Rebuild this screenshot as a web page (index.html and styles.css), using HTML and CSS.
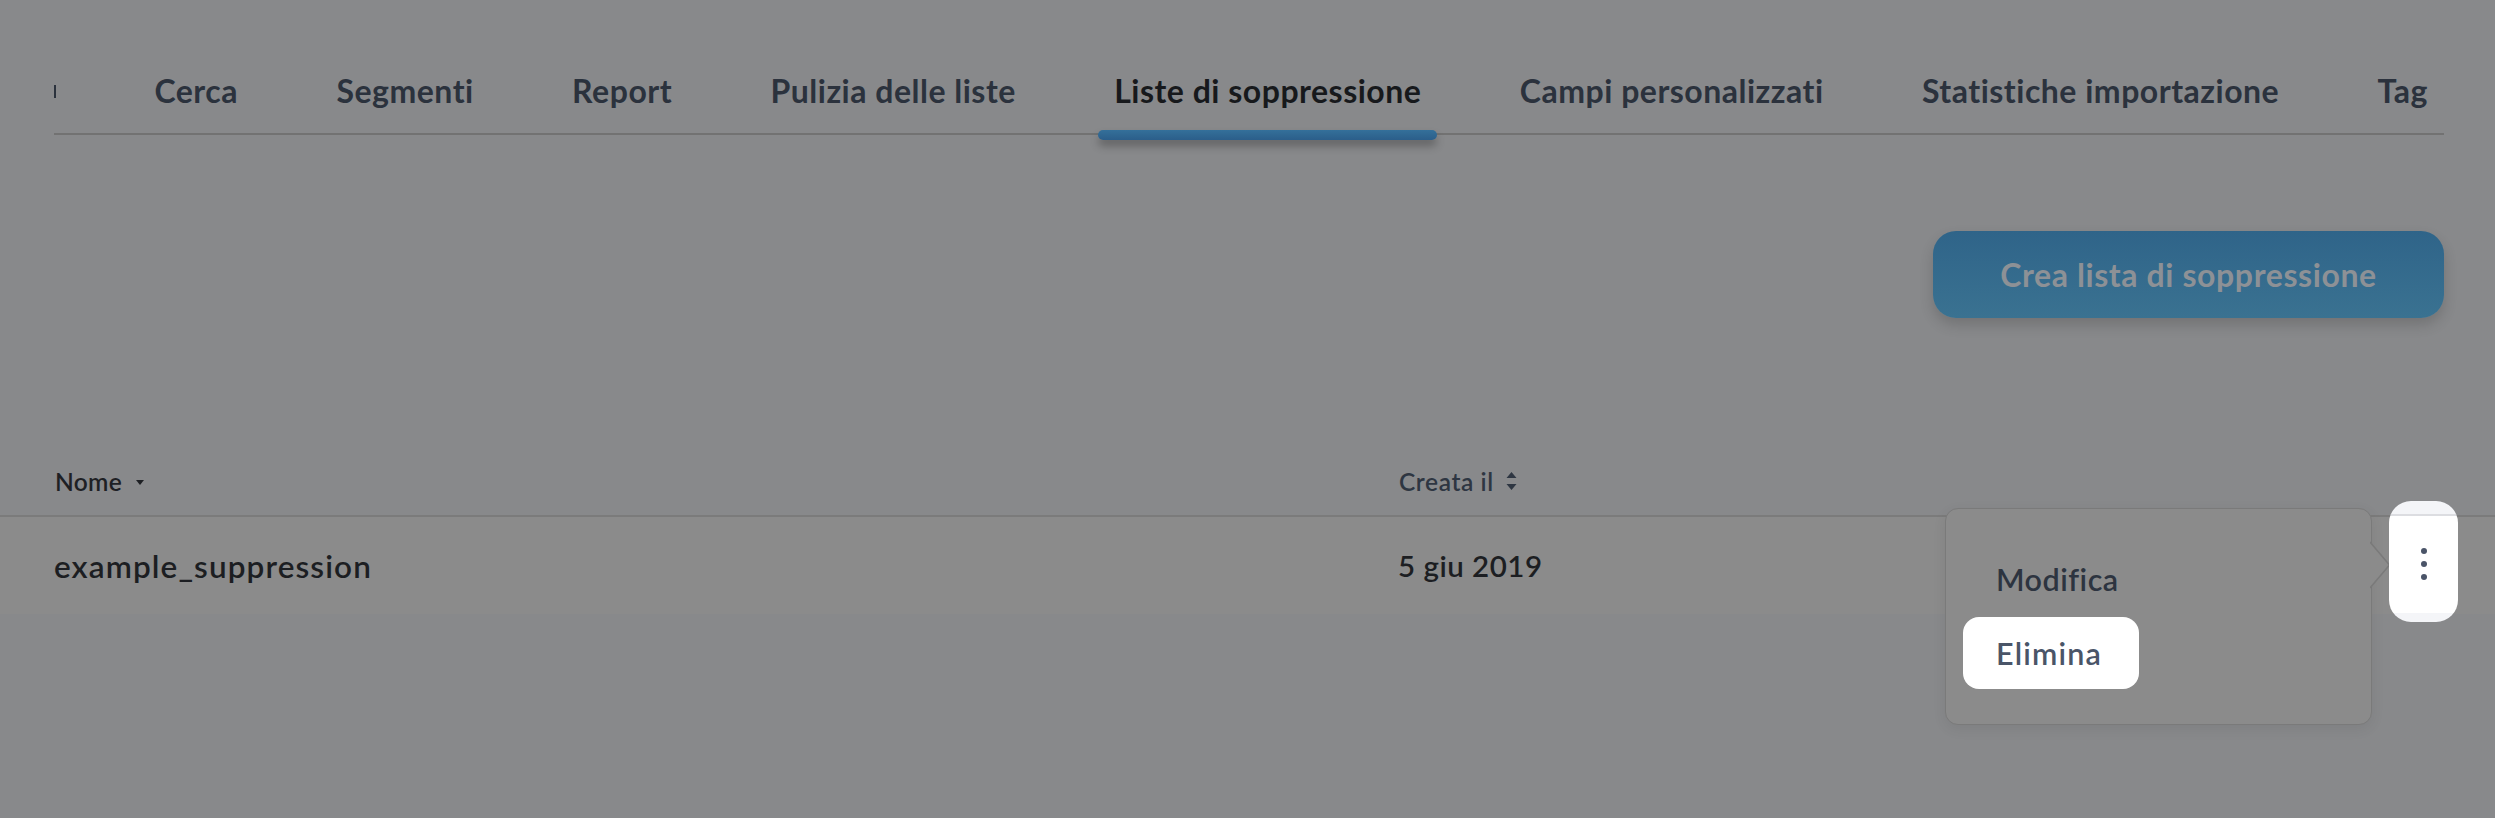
FILE: index.html
```html
<!DOCTYPE html>
<html lang="it">
<head>
<meta charset="utf-8">
<title>Liste di soppressione</title>
<link rel="stylesheet" href="styles.css">
</head>
<body>
<div class="page">
  <nav class="tabs">
    <span class="tab-clip"></span>
    <a class="tab">Cerca</a>
    <a class="tab">Segmenti</a>
    <a class="tab">Report</a>
    <a class="tab">Pulizia delle liste</a>
    <a class="tab tab-active">Liste di soppressione</a>
    <a class="tab">Campi personalizzati</a>
    <a class="tab">Statistiche importazione</a>
    <a class="tab">Tag</a>
  </nav>

  <div class="toolbar">
    <button class="btn-primary">Crea lista di soppressione</button>
  </div>

  <div class="table">
    <div class="thead">
      <div class="th th-strong">Nome <span class="caret"></span></div>
      <div class="th">Creata il
        <svg class="sort" width="11" height="20" viewBox="0 0 11 20"><path d="M5.5 1 L10.5 7 L0.5 7 Z M0.5 13 L10.5 13 L5.5 19 Z" fill="#2e3642"/></svg>
      </div>
    </div>
    <div class="trow">
      <div class="td td-name">example_suppression</div>
      <div class="td td-date">5 giu 2019</div>

      <div class="menu">
        <div class="menu-item">Modifica</div>
        <div class="menu-item menu-item-focus">Elimina</div>
        <svg class="menu-arrow" width="22" height="48" viewBox="0 0 22 48">
          <polygon points="0,1 19.5,24 0,47" fill="#8b8b8b"/>
          <polyline points="0,1 19.5,24 0,47" fill="none" stroke="#7a7a7a" stroke-width="1.5"/>
        </svg>
      </div>

      <div class="kebab">
        <span class="dot"></span><span class="dot"></span><span class="dot"></span>
      </div>
    </div>
  </div>
</div>
</body>
</html>
```

FILE: styles.css
```css
* { box-sizing: border-box; }

html, body {
  margin: 0;
  padding: 0;
}

body {
  background: #88898b;
  font-family: Lato, "Noto Sans", "Liberation Sans", sans-serif;
}

.page {
  width: 2495px;
  height: 818px;
  overflow: hidden;
  background: #88898b;
}

/* ---------- tabs ---------- */
.tabs {
  display: flex;
  justify-content: space-between;
  align-items: center;
  margin: 71px 51px 0 54px;
  padding: 0 16px 22px 0;
  border-bottom: 2px solid #727272;
}

.tab-clip {
  width: 2px;
  height: 13px;
  background: #2b323d;
}

.tab {
  position: relative;
  display: block;
  height: 40px;
  line-height: 40px;
  font-size: 32px;
  font-weight: 700;
  color: #2b323d;
  letter-spacing: 0.5px;
  white-space: nowrap;
}

.tab-active {
  color: #17191c;
}

.tab-active::after {
  content: "";
  position: absolute;
  left: -16px;
  right: -16px;
  bottom: -29px;
  height: 10px;
  border-radius: 5px;
  background: linear-gradient(#34709a, #2b5e8a);
  box-shadow: 0 6px 9px rgba(0, 0, 0, 0.28);
}

/* ---------- toolbar ---------- */
.toolbar {
  display: flex;
  justify-content: flex-end;
  padding: 96px 51px 0 0;
}

.btn-primary {
  width: 511px;
  height: 87px;
  border: 0;
  border-radius: 23px;
  background: linear-gradient(#2f6489, #3a7291);
  color: #8d9196;
  font-family: inherit;
  font-size: 32px;
  font-weight: 700;
  letter-spacing: 0.6px;
  box-shadow: 0 7px 14px rgba(0, 0, 0, 0.16);
}

/* ---------- table ---------- */
.table {
  margin-top: 147px;
}

.thead {
  display: grid;
  grid-template-columns: 1344px 1fr;
  padding: 0 0 18px 55px;
  border-bottom: 2px solid #7b7b7b;
}

.th {
  display: flex;
  align-items: center;
  height: 32px;
  font-size: 24.5px;
  font-weight: 600;
  color: #2e3642;
  letter-spacing: 0.6px;
}

.th-strong {
  color: #1e2024;
  letter-spacing: 0.3px;
}

.caret {
  width: 0;
  height: 0;
  margin-left: 14px;
  margin-top: 2px;
  border-left: 4.5px solid transparent;
  border-right: 4.5px solid transparent;
  border-top: 5px solid #1e2024;
}

.sort {
  margin-left: 12px;
}

.trow {
  position: relative;
  display: grid;
  grid-template-columns: 1344px 1fr;
  align-items: center;
  height: 97px;
  padding-left: 54px;
  background: #8b8b8b;
}

.td {
  font-weight: 600;
  color: #1c1e22;
}

.td-name {
  font-size: 31.5px;
  letter-spacing: 1.1px;
}

.td-date {
  font-size: 29.5px;
  letter-spacing: 0.5px;
}

/* ---------- dropdown menu ---------- */
.menu {
  position: absolute;
  top: -9px;
  right: 123px;
  width: 427px;
  height: 217px;
  padding: 34px 17px 0;
  display: flex;
  flex-direction: column;
  align-items: flex-start;
  gap: 2px;
  background: #8b8b8b;
  border: 1.5px solid #7a7a7a;
  border-radius: 13px;
  box-shadow: 0 4px 14px rgba(0, 0, 0, 0.07);
}

.menu-item {
  height: 72px;
  line-height: 72px;
  padding: 0 37px 0 33px;
  border-radius: 16px;
  font-size: 30.5px;
  font-weight: 600;
  color: #2d3440;
  letter-spacing: 0.5px;
}

.menu-item-focus {
  background: #ffffff;
  color: #4a5568;
  letter-spacing: 1.2px;
}

.menu-arrow {
  position: absolute;
  left: 100%;
  top: 32px;
  margin-left: -1.5px;
}

/* ---------- kebab (spotlighted) ---------- */
.kebab {
  position: absolute;
  top: -16px;
  right: 37px;
  width: 69px;
  height: 121px;
  border-radius: 22px;
  background: linear-gradient(#f4f5f8 0, #f4f5f8 13px, #dcdde1 13px, #dcdde1 15px, #ffffff 15px, #ffffff 112px, #f4f5f8 112px);
  display: flex;
  flex-direction: column;
  align-items: center;
  justify-content: center;
  gap: 7px;
  padding-top: 4px;
}

.dot {
  width: 6px;
  height: 6px;
  border-radius: 50%;
  background: #4a5468;
}
```
